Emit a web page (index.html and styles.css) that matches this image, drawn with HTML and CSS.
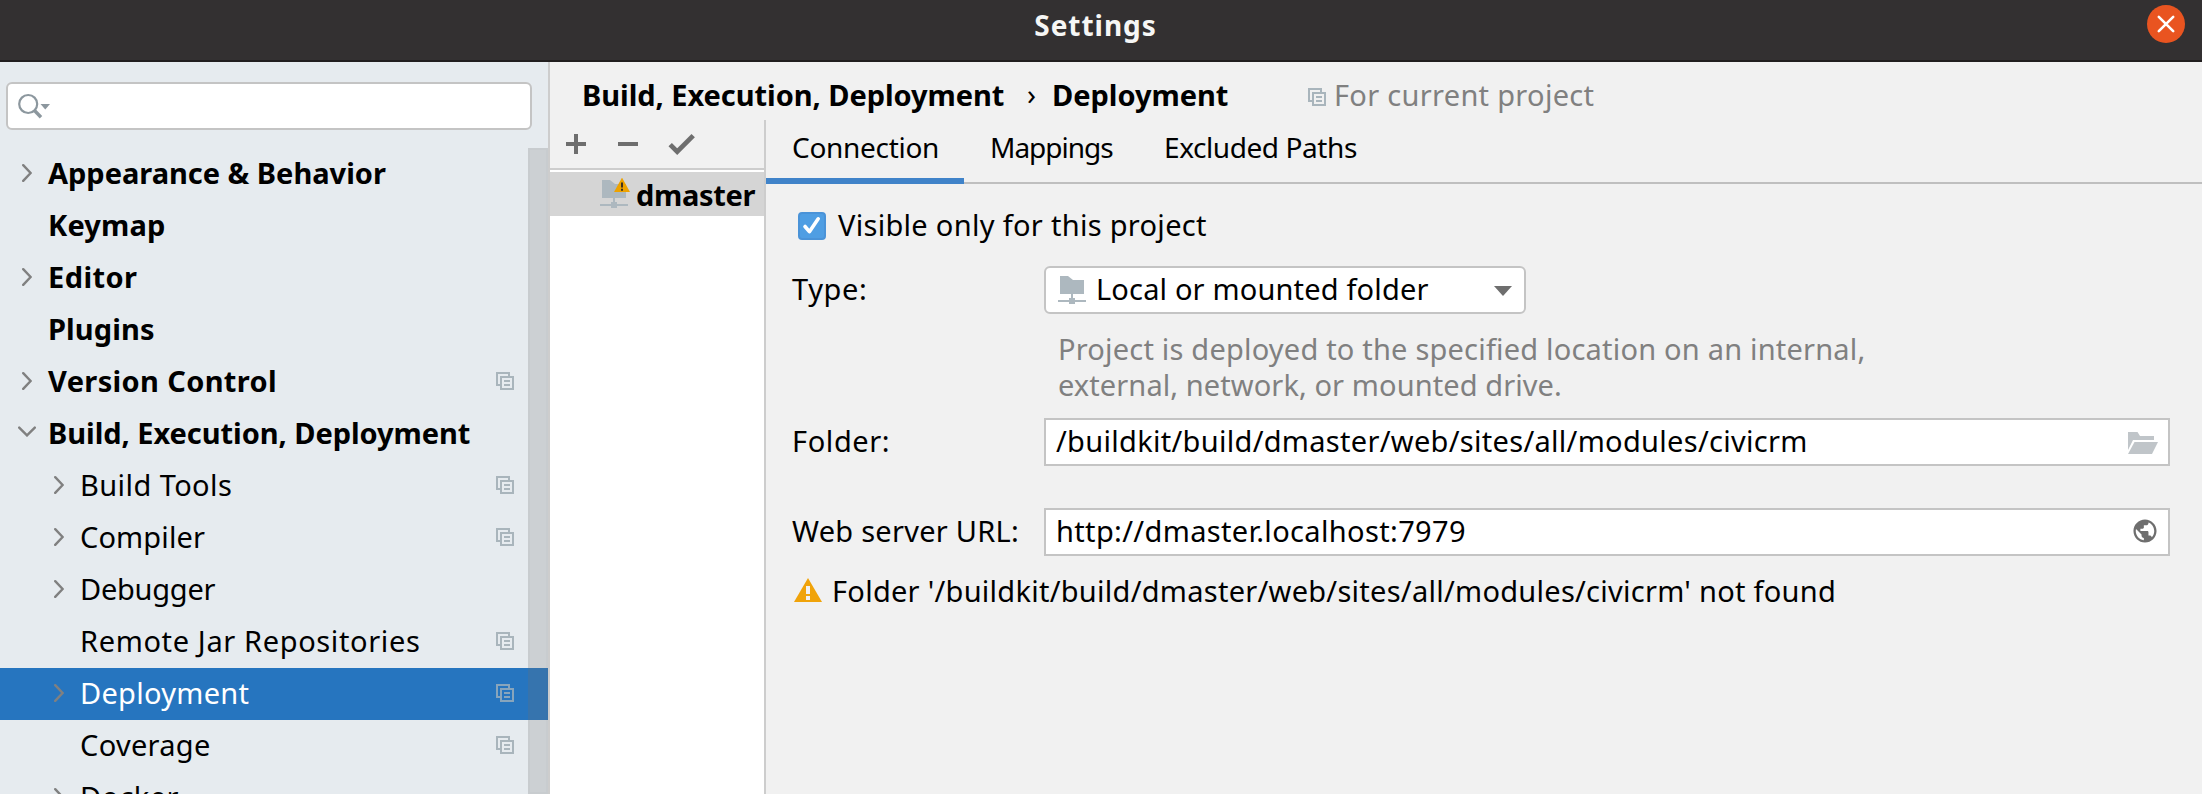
FILE: index.html
```html
<!DOCTYPE html>
<html lang="en">
<head>
<meta charset="utf-8">
<title>Settings</title>
<link rel="stylesheet" href="styles.css">
</head>
<body>
<svg class="defs" aria-hidden="true">
  <symbol id="right" viewBox="0 0 10 18"><path d="M1.2 1.2 8.6 9 1.2 16.8" fill="none" stroke="#808080" stroke-width="2.4" stroke-linecap="round"/></symbol>
  <symbol id="down" viewBox="0 0 18 11"><path d="M1.2 1.6 9 9.4 16.8 1.6" fill="none" stroke="#808080" stroke-width="2.4" stroke-linecap="round"/></symbol>
  <symbol id="copy" viewBox="0 0 18 18"><path d="M0 0h14v4h4v14H4v-4H0zM2 2v10h2V4h8V2zM6 6v10h10V6z" fill="#a9b5bc" fill-rule="evenodd"/><path d="M8 8h6v2H8zM8 12h6v2H8z" fill="#a9b5bc"/></symbol>
  <symbol id="server" viewBox="0 0 28 28"><path d="M2 0h8l5 4h11v14H15v4h2v2h11v2H17v2h-6v-2H0v-2h11v-2h2v-4H2z" fill="#adb8bf"/></symbol>
</svg>
<header class="titlebar">
  <h1 class="title">Settings</h1>
  <svg class="close" width="38" height="38" viewBox="0 0 38 38"><circle cx="19" cy="19" r="19" fill="#e95420"/><path d="M11.8 11.8l14.4 14.4M26.2 11.8 11.8 26.2" stroke="#fff" stroke-width="2.6" stroke-linecap="round"/></svg>
</header>
<div class="window">
  <aside class="sidebar">
    <div class="search">
      <svg width="34" height="28" viewBox="0 0 34 28"><circle cx="10.2" cy="11" r="9" fill="none" stroke="#8c979e" stroke-width="2.2"/><path d="M16.5 17.5l6.5 6.7" stroke="#8c979e" stroke-width="3.4"/><path d="M22.5 11h9.5l-4.75 5.6z" fill="#8c979e"/></svg>
    </div>
    <nav class="tree">
      <div class="row top"><svg class="arrow"><use href="#right"/></svg><span class="name ls-appearance">Appearance &amp; Behavior</span></div>
      <div class="row top"><span class="name ls-keymap">Keymap</span></div>
      <div class="row top"><svg class="arrow"><use href="#right"/></svg><span class="name ls-editor">Editor</span></div>
      <div class="row top"><span class="name ls-plugins">Plugins</span></div>
      <div class="row top"><svg class="arrow"><use href="#right"/></svg><span class="name ls-vcs">Version Control</span><svg class="copy"><use href="#copy"/></svg></div>
      <div class="row top"><svg class="arrow open"><use href="#down"/></svg><span class="name ls-build">Build, Execution, Deployment</span></div>
      <div class="row sub"><svg class="arrow"><use href="#right"/></svg><span class="name ls-tools">Build Tools</span><svg class="copy"><use href="#copy"/></svg></div>
      <div class="row sub"><svg class="arrow"><use href="#right"/></svg><span class="name ls-compiler">Compiler</span><svg class="copy"><use href="#copy"/></svg></div>
      <div class="row sub"><svg class="arrow"><use href="#right"/></svg><span class="name ls-debugger">Debugger</span></div>
      <div class="row sub"><span class="name ls-remote">Remote Jar Repositories</span><svg class="copy"><use href="#copy"/></svg></div>
      <div class="row sub selected"><svg class="arrow"><use href="#right"/></svg><span class="name ls-deployment">Deployment</span><svg class="copy"><use href="#copy"/></svg></div>
      <div class="row sub"><span class="name ls-coverage">Coverage</span><svg class="copy"><use href="#copy"/></svg></div>
      <div class="row sub"><svg class="arrow"><use href="#right"/></svg><span class="name ls-docker">Docker</span></div>
      <div class="scrollbar"></div>
    </nav>
  </aside>
  <main class="main">
    <div class="crumbs">
      <b class="ls-build">Build, Execution, Deployment</b>
      <span class="sep">›</span>
      <b class="ls-crumb">Deployment</b>
      <svg class="crumb-copy"><use href="#copy"/></svg>
      <span class="scope">For current project</span>
    </div>
    <div class="panes">
      <section class="servers">
        <div class="toolbar">
          <svg width="20" height="20" viewBox="0 0 20 20"><path d="M8 0h4v8h8v4h-8v8H8v-8H0V8h8z" fill="#6e6e6e"/></svg>
          <svg width="20" height="20" viewBox="0 0 20 20"><path d="M0 8h20v4H0z" fill="#6e6e6e"/></svg>
          <svg width="28" height="24" viewBox="0 0 28 24"><path d="M2.2 12.6l7 7L25.2 3.6" fill="none" stroke="#6e6e6e" stroke-width="4.8"/></svg>
        </div>
        <div class="list">
          <div class="server">
            <svg class="server-icon" width="30" height="30" viewBox="0 -2 30 30"><svg width="28" height="28"><use href="#server"/></svg><path d="M22-2.4 30 12H14z" fill="#eda200"/><path d="M21 2.5h2v5h-2zM21 8.7h2v2h-2z" fill="#3d3222"/></svg>
            <b class="ls-dmaster">dmaster</b>
          </div>
        </div>
      </section>
      <section class="detail">
        <div class="tabs">
          <div class="tab active">Connection</div>
          <div class="tab mappings">Mappings</div>
          <div class="tab excluded">Excluded Paths</div>
        </div>
        <div class="form">
          <div class="check">
            <svg width="28" height="28" viewBox="0 0 28 28"><rect x="1" y="1" width="26" height="26" rx="3" fill="#4f9ee3" stroke="#4a93d8" stroke-width="2"/><path d="M7 14.5l4.4 5.2L20.2 6.8" fill="none" stroke="#fff" stroke-width="3.6" stroke-linecap="round" stroke-linejoin="round"/></svg>
            <span>Visible only for this project</span>
          </div>
          <div class="line type">
            <label class="ls-label">Type:</label>
            <div class="select"><svg width="28" height="28"><use href="#server"/></svg><span class="ls-local">Local or mounted folder</span><svg class="caret" width="18" height="10" viewBox="0 0 18 10"><path d="M0 0h18L9 10z" fill="#6e6e6e"/></svg></div>
          </div>
          <p class="hint">Project is deployed to the specified location on an internal,<br><span class="ls-hint2">external, network, or mounted drive.</span></p>
          <div class="line">
            <label class="ls-label">Folder:</label>
            <div class="field"><span>/buildkit/build/dmaster/web/sites/all/modules/civicrm</span><svg class="open-icon" width="30" height="22" viewBox="0 0 30 22"><path d="M0 0h9.5l2.5 4h14v4H5L0 18z" fill="#c0c5c9"/><path d="M6.5 10H30l-6 12H0z" fill="#c0c5c9"/></svg></div>
          </div>
          <div class="line url">
            <label>Web server URL:</label>
            <div class="field"><span class="ls-url">http://dmaster.localhost:7979</span><svg class="globe" width="24" height="24" viewBox="1.6 1.6 20.8 20.8"><path d="M12 2C6.48 2 2 6.48 2 12s4.48 10 10 10 10-4.48 10-10S17.52 2 12 2zm-1 17.93c-3.95-.49-7-3.85-7-7.93 0-.62.08-1.21.21-1.79L9 15v1c0 1.1.9 2 2 2v1.93zm6.9-2.54c-.26-.81-1-1.39-1.9-1.39h-1v-3c0-.55-.45-1-1-1H8v-2h2c.55 0 1-.45 1-1V7h2c1.1 0 2-.9 2-2v-.41c2.93 1.19 5 4.06 5 7.41 0 2.08-.8 3.97-2.1 5.39z" fill="#6e6e6e"/></svg></div>
          </div>
          <div class="error">
            <svg width="28" height="24" viewBox="0 0 28 24"><path d="M14 0l14 24H0z" fill="#f0a30a"/><path d="M12 8h4v8h-4zM12 18h4v4h-4z" fill="#f1f1f1"/></svg>
            <span>Folder '/buildkit/build/dmaster/web/sites/all/modules/civicrm' not found</span>
          </div>
        </div>
      </section>
    </div>
  </main>
</div>
</body>
</html>
```
FILE: styles.css
```css
* { box-sizing: border-box; }
html, body { height: 100%; }
body {
  margin: 0;
  height: 794px;
  overflow: hidden;
  background: #f1f1f1;
  color: #000;
  font: 29px/39px "Noto Sans", sans-serif;
  letter-spacing: .3px;
  white-space: nowrap;
}
svg { display: block; flex: none; }
b { font-weight: 700; }
.defs { width: 0; height: 0; position: absolute; }

/* title bar */
.titlebar {
  height: 62px;
  background: #333031;
  border-bottom: 2px solid #211e1f;
  display: grid;
  grid-template-columns: 1fr auto 1fr;
}
.title {
  grid-column: 2;
  margin: 6px 11px 0 0;
  color: #f6f6f5;
  font-size: 28px;
  font-weight: 700;
  letter-spacing: .95px;
}
.close { justify-self: end; margin: 5px 17px 0 0; }

.window { display: flex; height: 732px; }

/* category tree */
.sidebar {
  width: 550px;
  flex: none;
  background: #e6ebef;
  border-right: 2px solid #cdcdcd;
  overflow: hidden;
}
.search {
  width: 526px;
  height: 48px;
  margin: 20px 0 18px 6px;
  padding: 9px 0 0 10px;
  background: #fff;
  border: 2px solid #c4c4c4;
  border-radius: 6px;
}
.tree { position: relative; height: 646px; overflow: hidden; }
.row { height: 52px; display: flex; line-height: 49px; }
.top { padding-left: 48px; font-weight: 700; }
.sub { padding-left: 80px; }
.arrow { width: 10px; height: 18px; margin: 16px 16px 0 -26px; }
.arrow.open { width: 18px; height: 11px; margin: 18px 12px 0 -30px; }
.copy { width: 18px; height: 18px; margin: 16px 34px 0 auto; }
.selected { background: #2675bf; color: #fff; }
.selected .copy { opacity: .75; }
.scrollbar {
  position: absolute;
  top: 0;
  right: 0;
  width: 20px;
  height: 100%;
  background: rgba(115, 115, 115, .22);
  border: 2px solid rgba(89, 89, 89, .03);
}

/* content */
.main { flex: 1; min-width: 0; display: flex; flex-direction: column; }
.crumbs {
  height: 58px;
  padding: 13px 0 0 32px;
  display: grid;
  grid-template-columns: 445px 25px 256px 26px auto;
  justify-content: start;
}
.sep { line-height: 37px; }
.crumb-copy { width: 18px; height: 18px; margin-top: 13px; }
.scope { color: #808080; }
.panes { flex: 1; display: flex; }

.servers {
  width: 216px;
  flex: none;
  display: flex;
  flex-direction: column;
  border-right: 2px solid #cdcdcd;
}
.toolbar {
  height: 50px;
  border-bottom: 2px solid #cdcdcd;
  display: flex;
  align-items: center;
  gap: 32px;
  padding-left: 16px;
}
.toolbar svg:last-child { margin-left: -2px; }
.list { flex: 1; background: #fff; padding-top: 2px; }
.server { height: 44px; background: #d5d5d5; display: flex; padding: 3px 0 0 50px; }
.server-icon { margin: 3px 6px 0 0; }

.detail { flex: 1; min-width: 0; }
.tabs {
  height: 64px;
  display: flex;
  font-size: 28px;
  line-height: 38px;
  box-shadow: inset 0 -2px #bfbfbf;
}
.tab { padding: 8px 0 0 26px; width: 198px; letter-spacing: -.3px; }
.active { border-bottom: 6px solid #4083c9; }
.mappings { width: 174px; letter-spacing: -1px; }
.excluded { padding-left: 26px; width: auto; letter-spacing: -.42px; }

.form { padding: 20px 32px 0 26px; }
.check { display: flex; margin-bottom: 23px; padding-left: 6px; gap: 12px; }
.check svg { margin-top: 8px; }
.check span { padding-top: 1px; margin-bottom: -1px; }
.line { height: 48px; display: grid; grid-template-columns: 252px 1fr; line-height: 45px; }
.select, .field {
  height: 48px;
  background: #fff;
  border: 2px solid #c4c4c4;
  display: flex;
  line-height: 41px;
}
.select { width: 482px; border-radius: 6px; padding: 0 12px; gap: 10px; }
.select svg { margin-top: 8px; }
.select .caret { margin: 18px 0 0 auto; }
.field { padding-left: 10px; }
.open-icon { margin: 12px 10px 0 auto; }
.globe { margin: 9px 11px 0 auto; }
.hint { margin: 17px 0 15px 266px; line-height: 36px; color: #808080; letter-spacing: .2px; }
.url { margin-top: 42px; letter-spacing: .26px; }
.error { display: flex; margin-top: 15px; padding-left: 2px; gap: 10px; letter-spacing: .27px; }
.error svg { margin-top: 7px; }

/* tracking per label */
.ls-appearance { letter-spacing: -.02px; }
.ls-keymap { letter-spacing: .16px; }
.ls-editor { letter-spacing: .41px; }
.ls-plugins { letter-spacing: .11px; }
.ls-vcs { letter-spacing: .36px; }
.ls-build { letter-spacing: -.05px; }
.ls-crumb { letter-spacing: -.02px; }
.ls-dmaster { letter-spacing: -.32px; }
.ls-tools { letter-spacing: .42px; }
.ls-compiler { letter-spacing: .12px; }
.ls-debugger { letter-spacing: -.25px; }
.ls-remote { letter-spacing: .63px; }
.ls-deployment { letter-spacing: .28px; }
.ls-coverage { letter-spacing: .3px; }
.ls-docker { letter-spacing: .4px; }
.ls-label { letter-spacing: .6px; }
.ls-local { letter-spacing: .16px; }
.ls-hint2 { letter-spacing: .09px; }
.ls-url { letter-spacing: .35px; }
```
